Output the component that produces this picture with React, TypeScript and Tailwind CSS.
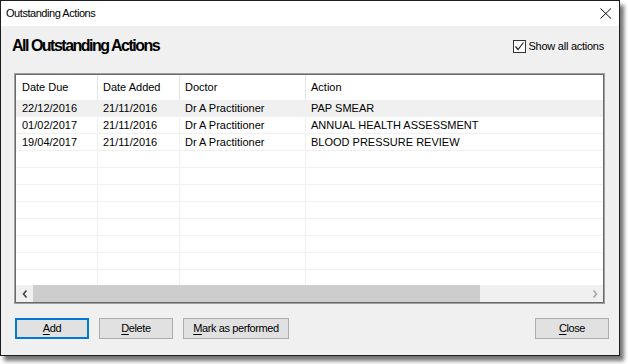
import React from "react";

const rows = [
  { due: "22/12/2016", added: "21/11/2016", doctor: "Dr A Practitioner", action: "PAP SMEAR" },
  { due: "01/02/2017", added: "21/11/2016", doctor: "Dr A Practitioner", action: "ANNUAL HEALTH ASSESSMENT" },
  { due: "19/04/2017", added: "21/11/2016", doctor: "Dr A Practitioner", action: "BLOOD PRESSURE REVIEW" },
];

const blanks = Array.from({ length: 8 });

const Btn = ({
  mn,
  rest,
  w,
  focused,
}: {
  mn: string;
  rest: string;
  w: string;
  focused?: boolean;
}) => (
  <button
    className={`${w} h-[21px] flex items-center justify-center bg-[#e1e1e1] text-[11px] tracking-[-0.4px] text-black leading-none ${
      focused ? "border-2 border-[#0078d7]" : "border border-[#adadad]"
    }`}
  >
    <span>
      <u className="underline-offset-2">{mn}</u>
      {rest}
    </span>
  </button>
);

export default function App() {
  return (
    <div className="w-[628px] h-[364px] bg-white font-['Liberation_Sans',Arial,sans-serif]">
      <div className="w-[620px] h-[356px] flex flex-col border border-[#1e1e1e] bg-[#f0f0f0] shadow-[4px_5px_4px_rgba(0,0,0,0.55)]">
        {/* title bar */}
        <div className="h-[25px] bg-white flex items-center justify-between pl-[5px] pr-[7px]">
          <span className="text-[11px] tracking-[-0.45px] text-black">Outstanding Actions</span>
          <svg width="12" height="11" viewBox="0 0 12 11" className="mb-[1px]">
            <path d="M0.5 0.5 L11 10.5 M11 0.5 L0.5 10.5" stroke="#111" strokeWidth="1" />
          </svg>
        </div>

        {/* heading row */}
        <div className="h-[47px] flex items-start justify-between pt-[10px] pl-[11px] pr-[15px]">
          <h1 className="text-[16px] font-bold tracking-[-1.5px] leading-[20px] text-black">
            All Outstanding Actions
          </h1>
          <label className="flex items-center gap-[3px] mt-[2px]">
            <span className="w-[13px] h-[13px] border border-[#333] bg-white flex items-center justify-center">
              <svg width="11" height="11" viewBox="0 0 11 11">
                <path d="M1.5 5.5 L4 8.5 L9.5 1.5" fill="none" stroke="#222" strokeWidth="1.2" />
              </svg>
            </span>
            <span className="text-[11px] tracking-[-0.25px] text-black">Show all actions</span>
          </label>
        </div>

        {/* list */}
        <div className="pl-[13px]">
          <div className="w-[591px] h-[231px] border border-[#a0a0a0] bg-white">
            <div className="h-full border border-[#696969] flex flex-col">
              <div className="h-[25px] flex text-[11px] text-black shrink-0">
                <div className="w-[82px] border-r border-[#e5e5e5] pl-[6px] flex items-center">Date Due</div>
                <div className="w-[82px] border-r border-[#e5e5e5] pl-[5px] flex items-center">Date Added</div>
                <div className="w-[126px] border-r border-[#e5e5e5] pl-[5px] flex items-center">Doctor</div>
                <div className="flex-1 pl-[5px] flex items-center">Action</div>
              </div>
              <div className="flex-1 overflow-hidden">
                {rows.map((r, i) => (
                  <div
                    key={i}
                    className={`h-[17px] flex text-[11px] text-black border-b border-[#f0f0f0] ${
                      i === 0 ? "bg-[#f0f0f0]" : ""
                    }`}
                  >
                    <div className="w-[82px] border-r border-[#f0f0f0] pl-[6px] flex items-center">{r.due}</div>
                    <div className="w-[82px] border-r border-[#f0f0f0] pl-[5px] flex items-center">{r.added}</div>
                    <div className="w-[126px] border-r border-[#f0f0f0] pl-[5px] flex items-center">{r.doctor}</div>
                    <div className="flex-1 pl-[5px] flex items-center">{r.action}</div>
                  </div>
                ))}
                {blanks.map((_, i) => (
                  <div key={i} className="h-[17px] flex border-b border-[#f0f0f0]">
                    <div className="w-[82px] border-r border-[#f0f0f0]" />
                    <div className="w-[82px] border-r border-[#f0f0f0]" />
                    <div className="w-[126px] border-r border-[#f0f0f0]" />
                    <div className="flex-1" />
                  </div>
                ))}
              </div>
              {/* horizontal scrollbar */}
              <div className="h-[17px] shrink-0 bg-[#f0f0f0] flex items-center">
                <div className="w-[17px] h-full flex items-center justify-center">
                  <svg width="6" height="8" viewBox="0 0 6 8">
                    <path d="M4.5 0.5 L1.5 4 L4.5 7.5" fill="none" stroke="#444" strokeWidth="1.6" />
                  </svg>
                </div>
                <div className="w-[447px] h-full bg-[#cdcdcd]" />
                <div className="flex-1" />
                <div className="w-[17px] h-full flex items-center justify-center">
                  <svg width="6" height="8" viewBox="0 0 6 8">
                    <path d="M1.5 0.5 L4.5 4 L1.5 7.5" fill="none" stroke="#a6a6a6" strokeWidth="1.6" />
                  </svg>
                </div>
              </div>
            </div>
          </div>
        </div>

        {/* buttons */}
        <div className="flex items-center gap-[10px] pl-[14px] pr-[10px] mt-[14px]">
          <Btn mn="A" rest="dd" w="w-[74px]" focused />
          <Btn mn="D" rest="elete" w="w-[74px]" />
          <Btn mn="M" rest="ark as performed" w="w-[106px]" />
          <div className="ml-auto">
            <Btn mn="C" rest="lose" w="w-[74px]" />
          </div>
        </div>
      </div>
    </div>
  );
}
